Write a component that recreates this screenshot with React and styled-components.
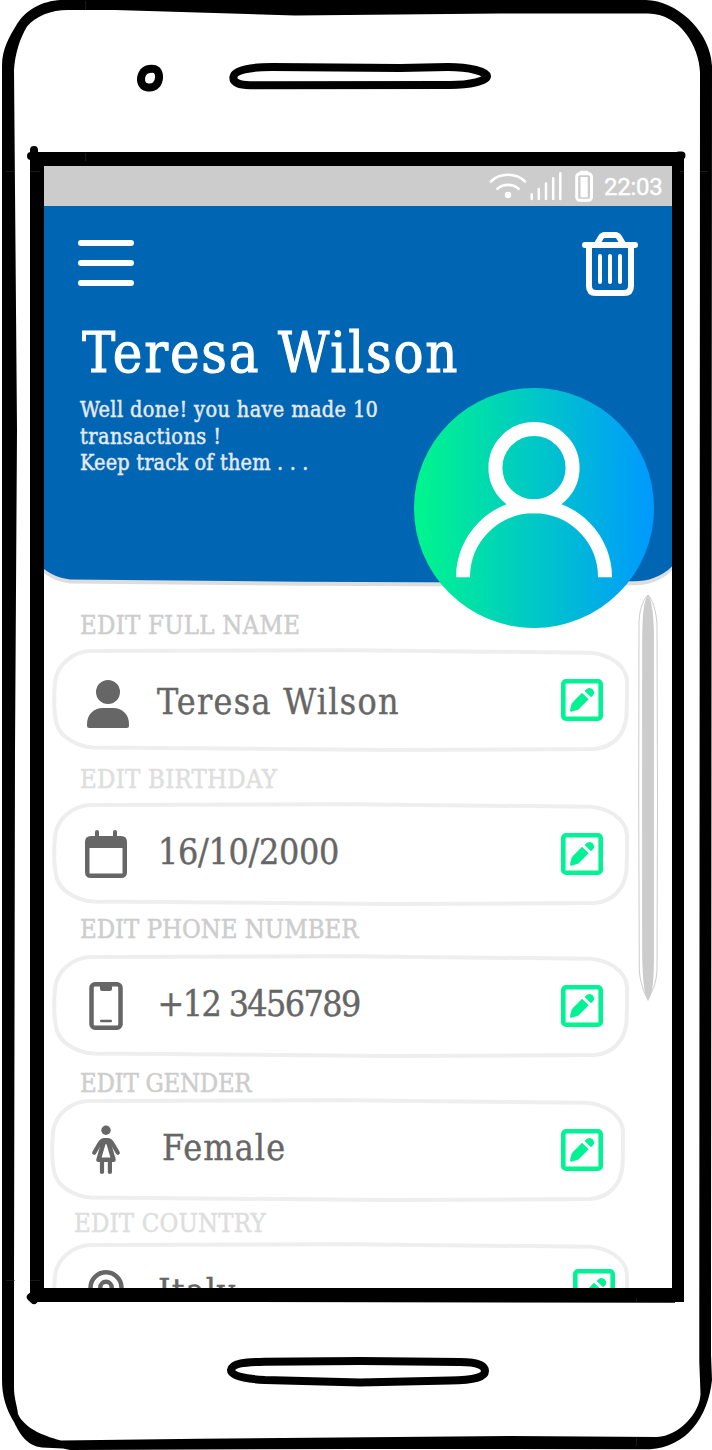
import React from "react";
import styled, { createGlobalStyle } from "styled-components";

const SLAB = '"DejaVu Serif Condensed", "DejaVu Serif", "Liberation Serif", serif';

const GlobalStyle = createGlobalStyle`
  * { box-sizing: border-box; }
  body { margin: 0; background: #fff; }
  svg { display: block; }
`;

const Phone = styled.div`
  position: relative;
  width: 712px;
  height: 1450px;
  padding: 166px 40px 162px 44px;
  overflow: hidden;
  background: #fff;
`;

const PhoneDrawing = styled.svg`
  position: absolute;
  inset: 0;
  pointer-events: none;
`;

const Screen = styled.main`
  position: relative;
  display: flex;
  flex-direction: column;
  width: 628px;
  height: 1122px;
  overflow: hidden;
  background: #fff;
`;

const StatusBar = styled.div`
  display: flex;
  flex: none;
  align-items: center;
  justify-content: flex-end;
  height: 40px;
  padding-right: 9px;
  background: #ccc;
`;

const Clock = styled.span`
  width: 59px;
  margin-left: 8px;
  padding-top: 2px;
  font: 400 24px/40px Roboto, sans-serif;
  letter-spacing: -0.25px;
  white-space: nowrap;
  color: #fff;
  -webkit-text-stroke: 0.4px #fff;
`;

const Header = styled.header`
  position: relative;
  flex: none;
  height: 378px;
  padding: 26px 34px 0;
`;

const HeaderShape = styled.svg`
  position: absolute;
  top: 0;
  left: 0;
`;

const Toolbar = styled.div`
  position: relative;
  display: flex;
  justify-content: space-between;
  height: 64px;
`;

const Title = styled.h1`
  position: relative;
  margin: 22px 0 0 4px;
  font: 400 55.5px/70px ${SLAB};
  letter-spacing: ${(p) => p.$spacing}px;
  white-space: nowrap;
  color: #fff;
  -webkit-text-stroke: 1px #fff;
`;

const Message = styled.p`
  position: relative;
  margin: 9px 0 0 2px;
  font: 400 21.5px/26.5px ${SLAB};
  white-space: nowrap;
  color: #e6e9ee;
  -webkit-text-stroke: 0.45px #e6e9ee;
`;

const Line = styled.span`
  display: block;
  letter-spacing: ${(p) => p.$spacing}px;
`;

const Avatar = styled.svg`
  position: absolute;
  top: 182px;
  left: 370px;
  z-index: 1;
`;

const Body = styled.section`
  display: flex;
  flex: 1;
  min-height: 0;
  padding-left: 8px;
`;

const Fields = styled.div`
  width: 576px;
`;

const Scrollbar = styled.svg`
  flex: none;
  margin: 10px 0 0 9px;
`;

const Label = styled.div`
  height: ${(p) => p.$height}px;
  padding-top: ${(p) => p.$top}px;
  padding-left: ${(p) => p.$left}px;
  font: 400 25.5px/30px ${SLAB};
  letter-spacing: ${(p) => p.$spacing}px;
  white-space: nowrap;
  color: ${(p) => (p.$faint ? "#dedede" : "#cdcdcd")};
  -webkit-text-stroke: 0.5px currentColor;
`;

const Row = styled.div`
  position: relative;
  display: flex;
  height: 104px;
  padding: 0 ${(p) => p.$right}px 0 29px;
`;

const Outline = styled.svg`
  position: absolute;
  top: 0;
  left: ${(p) => p.$shift}px;
`;

const Glyph = styled.svg`
  position: relative;
  flex: none;
  margin-top: 26px;
  color: #666;
`;

const Value = styled.span`
  position: relative;
  margin-top: ${(p) => p.$top}px;
  margin-left: ${(p) => p.$left}px;
  font: 400 35.5px/60px ${SLAB};
  letter-spacing: ${(p) => p.$spacing}px;
  white-space: nowrap;
  color: #666;
  -webkit-text-stroke: 0.4px #666;
`;

const EditButton = styled.button`
  position: relative;
  width: 42px;
  height: 42px;
  margin-top: ${(p) => p.$top}px;
  margin-left: auto;
  padding: 0;
  border: 0;
  background: none;
`;

const IconButton = styled.button`
  padding: 0;
  border: 0;
  background: none;
`;

const Frame = () => (
  <PhoneDrawing width="712" height="1450" viewBox="0 0 712 1450">
    <path
      fillRule="evenodd"
      d="M2 66C2 48 10 36 17 24C28 7 46 0 64 0H646C677 1 706 29 711 58L712 66L711 1300V1355L712 1380C708 1418 686 1447 650 1449.3L490 1449L356 1449L70 1450L63 1448.5L42 1447.5C27 1446 19 1433 14.5 1423C6 1409 2 1396 2 1380Z
      M14 70C15 54 20 38 27 26.500C36 16 51 10 68 10H115L295 15.5L500 13.5H648C680 14 699 46 700 72L699.3 1300V1362L700.5 1394C700 1413 679 1436 657 1437L510 1436L200 1438.7L61 1440.5C40 1435 24 1427 18 1414C17 1405 14 1398 14 1388V1280L15 750L17 430L15 190Z"
    />
    <path d="M30 152H684V1302H675V1302.700L212 1302H30ZM44 166V1288H672V166Z" fillRule="evenodd" />
    <g fill="none" stroke="#000" strokeWidth="8" strokeLinecap="round" strokeLinejoin="round">
      <path d="M34 150V156H31M30.8 1297L34 1300M679 155.5H681.5" />
      <path d="M149 69C143 70 140 76 141.3 82C143 88.500 152 89 156 85C160 81 160 73 156.500 70C154.500 68.400 152 68.500 149 69Z" />
      <path d="M233.500 77C234 70 250 67 272 67L400 68L448 67C470 67 487 72 487 76C487 81 470 85 450 85L250 85.300C240 85 232.500 83 233.500 77Z" />
      <path d="M231 1370C232 1363 245 1362 265 1361.700L360 1361L460 1362C478 1362 485 1366 485 1371C485 1377 475 1380 450 1380.600L360 1382.500L265 1380C245 1379 231 1376 231 1370Z" />
    </g>
    <path d="M85.500 153V161M6 171.500H15M30 171.500H40M6 1280.500H15M30 1280.500H40M680 171.500H684M700 171.500H708M636.500 1298V1302.500M636.500 1438V1446M85.500 1V10" stroke="#333" strokeWidth=".5" />
  </PhoneDrawing>
);

const StatusIcons = () => (
  <svg width="110" height="40" viewBox="486 166 110 40" fill="none" stroke="#fff" strokeLinecap="round">
    <path d="M491 181.500C500 172.500 516 172.500 525 181.500M497.500 188.700C503.500 183.700 512.500 183.700 518.500 188.700" strokeWidth="2.700" />
    <circle cx="508" cy="195" r="3.200" fill="#fff" stroke="none" />
    <path d="M531.700 194.300V199M538.800 189V199M546 183.600V199M553.200 178.300V199M560.300 173.300V199" strokeWidth="2.500" />
    <rect x="576.700" y="173.700" width="14.800" height="26.500" rx="3" strokeWidth="3" />
    <path d="M581 172.300H587" strokeWidth="3.300" />
    <path d="M580.500 177H587.700V197.300H580.500Z" fill="#fff" stroke="none" />
  </svg>
);

const MenuIcon = () => (
  <svg width="56" height="64" viewBox="0 0 56 64" stroke="#fff" strokeWidth="6" strokeLinecap="round">
    <path d="M3 11H53M3 31H53M3 51H53" />
  </svg>
);

const TrashIcon = () => (
  <svg width="56" height="64" viewBox="0 0 56 64" fill="none" stroke="#fff" strokeLinecap="round" strokeLinejoin="round">
    <path d="M3 13H53M7 13V54Q7 61 14 61H42Q49 61 49 54V13M15 12L18.500 6Q20 3 23 3H33Q36 3 37.500 6L41 12" strokeWidth="6" />
    <path d="M18 24V50M28 24V50M38 24V50" strokeWidth="4" />
  </svg>
);

const blueEdge = "M0 0H628V360.500C617 371 604 375.300 590 375.300L440 376.500L256 375.700L26 373.500C15 372 7 368.500 0 363Z";

const glyphs = {
  person: (
    <>
      <circle cx="27" cy="18" r="12" fill="currentColor" />
      <path d="M22 34H32C42 34 48 41 48 50V51.500Q48 54 45.500 54H8.500Q6 54 6 51.500V50C6 41 12 34 22 34Z" fill="currentColor" />
    </>
  ),
  calendar: (
    <>
      <path d="M16 4V12M34 4V12" stroke="currentColor" strokeWidth="4" strokeLinecap="round" />
      <path fillRule="evenodd" d="M10 8H40Q46 8 46 14V44Q46 50 40 50H10Q4 50 4 44V14Q4 8 10 8ZM8.500 20V45.500H41.500V20Z" fill="currentColor" />
    </>
  ),
  phone: (
    <>
      <rect x="10.500" y="4.200" width="29" height="43.600" rx="3.500" fill="none" stroke="currentColor" strokeWidth="4.500" />
      <path d="M19 5H31V9Q31 11 29 11H21Q19 11 19 9Z" fill="currentColor" />
      <path d="M20.300 41H29.700" stroke="currentColor" strokeWidth="2.700" strokeLinecap="round" />
    </>
  ),
  female: (
    <>
      <circle cx="25" cy="6.300" r="4.700" fill="currentColor" />
      <g fill="none" stroke="currentColor" strokeWidth="4.200" strokeLinecap="round" strokeLinejoin="round">
        <path d="M13.200 28.800L18 20.500Q20.500 16.200 23.500 16.200H26.500Q29.500 16.200 32 20.500L36.800 28.800" />
        <path d="M22.700 18L17.500 35.800H32.500L27.300 18Z" strokeWidth="4.600" />
        <path d="M21 37V47.900M28.900 37V47.900" />
      </g>
    </>
  ),
  pin: (
    <g fill="none" stroke="currentColor" strokeWidth="4.500">
      <path d="M25 50C15 37 9.500 29 9.500 19.800A15.500 15.500 0 0 1 40.500 19.800C40.500 29 35 37 25 50Z" />
      <circle cx="25" cy="19.500" r="5.700" />
    </g>
  ),
};

const EditIcon = () => (
  <svg width="42" height="42" viewBox="0 0 42 42">
    <rect x="2.300" y="2.300" width="37.400" height="37.400" rx="2.800" fill="none" stroke="#00f293" strokeWidth="4.600" />
    <path d="M21 13.700L27.700 20.300L18.500 29.500Q17.600 30.500 16 31L10.500 32.800Q8.700 33 9.100 31L10.300 26Q10.500 24.700 11.500 23.600ZM23.600 12L26 9.800C28 8.300 30.500 9 32 10.800C33.500 12.700 33.500 14.700 32.300 16L30.100 18.300Z" fill="#00f293" />
  </svg>
);

const fields = [
  { label: "EDIT FULL NAME", lh: 64, lt: 26, ls: 0.25, value: "Teresa Wilson", glyph: "person", vt: 24, vl: 24, vs: 1.3 },
  { label: "EDIT BIRTHDAY", lh: 50, lt: 12, ls: 0.25, faint: true, value: "16/10/2000", glyph: "calendar", vt: 20, vl: 25, vs: -0.3 },
  { label: "EDIT PHONE NUMBER", lh: 48, lt: 8, ls: -0.03, value: "+12 3456789", glyph: "phone", vt: 20, vl: 24.5, vs: -1.6 },
  { label: "EDIT GENDER", lh: 40, lt: 10, ls: -0.27, value: "Female", glyph: "female", vt: 19.5, vl: 29, vs: 1.1, narrow: true },
  { label: "EDIT COUNTRY", lh: 40, lt: 6, ls: 0.2, left: 22, faint: true, value: "Italy", glyph: "pin", vt: 20, vl: 25, vs: 1.1, last: true },
];

const Field = ({ f }) => (
  <>
    <Label $height={f.lh} $top={f.lt} $left={f.left ?? 28} $spacing={f.ls} $faint={f.faint}>
      {f.label}
    </Label>
    <Row $right={f.last ? 13 : 25}>
      <Outline
        $shift={f.narrow ? -2 : 0}
        width={f.narrow ? 575 : 577}
        height="104"
        viewBox="0 0 577 104"
        preserveAspectRatio="none"
        fill="none"
        stroke="#eee"
        strokeWidth="4"
      >
        <path d="M38 3C20 4 5 17 3 34C1.500 52 1.800 66 5 77C9 89 24 98 41 99.500L340 102L542 101C560 100 573 87 574.500 68L575 50V32C573 16 556 6 538 4.700L300 2.300Z" />
      </Outline>
      <Glyph width="52" height="56" viewBox="0 0 52 56">
        {glyphs[f.glyph]}
      </Glyph>
      <Value $top={f.vt} $left={f.vl} $spacing={f.vs}>
        {f.value}
      </Value>
      <EditButton aria-label={f.label} $top={f.last ? 27 : 31}>
        <EditIcon />
      </EditButton>
    </Row>
  </>
);

export default function App() {
  return (
    <Phone>
      <GlobalStyle />
      <Frame />
      <Screen>
        <StatusBar>
          <StatusIcons />
          <Clock>22:03</Clock>
        </StatusBar>
        <Header>
          <HeaderShape width="628" height="382" viewBox="0 0 628 382">
            <path d={blueEdge} fill="#ddd" transform="translate(0 4)" />
            <path d={blueEdge} fill="#0066b4" />
          </HeaderShape>
          <Toolbar>
            <IconButton aria-label="Menu"><MenuIcon /></IconButton>
            <IconButton aria-label="Delete"><TrashIcon /></IconButton>
          </Toolbar>
          <Title $spacing={1.85}>Teresa Wilson</Title>
          <Message>
            <Line $spacing={0.38}>Well done! you have made 10</Line>
            <Line $spacing={0.45}>transactions !</Line>
            <Line $spacing={0.18}>Keep track of them . . .</Line>
          </Message>
          <Avatar width="240" height="240" viewBox="0 0 240 240">
            <defs>
              <linearGradient id="avatar">
                <stop offset="0" stopColor="#00f68c" />
                <stop offset=".5" stopColor="#00c8c6" />
                <stop offset="1" stopColor="#0099ff" />
              </linearGradient>
            </defs>
            <circle cx="120" cy="120" r="120" fill="url(#avatar)" />
            <g fill="none" stroke="#fff" strokeWidth="14">
              <circle cx="120" cy="79.700" r="38.600" />
              <path d="M49 189.300A71 71 0 0 1 191 189.300" />
            </g>
          </Avatar>
        </Header>
        <Body>
          <Fields>
            {fields.map((f) => (
              <Field key={f.label} f={f} />
            ))}
          </Fields>
          <Scrollbar width="22" height="410" viewBox="0 0 22 410">
            <path d="M11 1C5 7 2 18 2 30L1.700 205L2.300 376C3 388 7 399 10.500 405C15 399 19.500 389 20 376L20.500 205L20 30C19 17 16 6 11 1Z" fill="#fff" stroke="#ccc" strokeWidth="1" />
            <path d="M11 1C6.500 7 5.500 20 5.200 45L5 205L5.200 362C5.800 388 7 400 11 407C15.500 400 16.800 388 17 362V45C16.800 24 15.500 7 11 1Z" fill="#ccc" />
          </Scrollbar>
        </Body>
      </Screen>
    </Phone>
  );
}
